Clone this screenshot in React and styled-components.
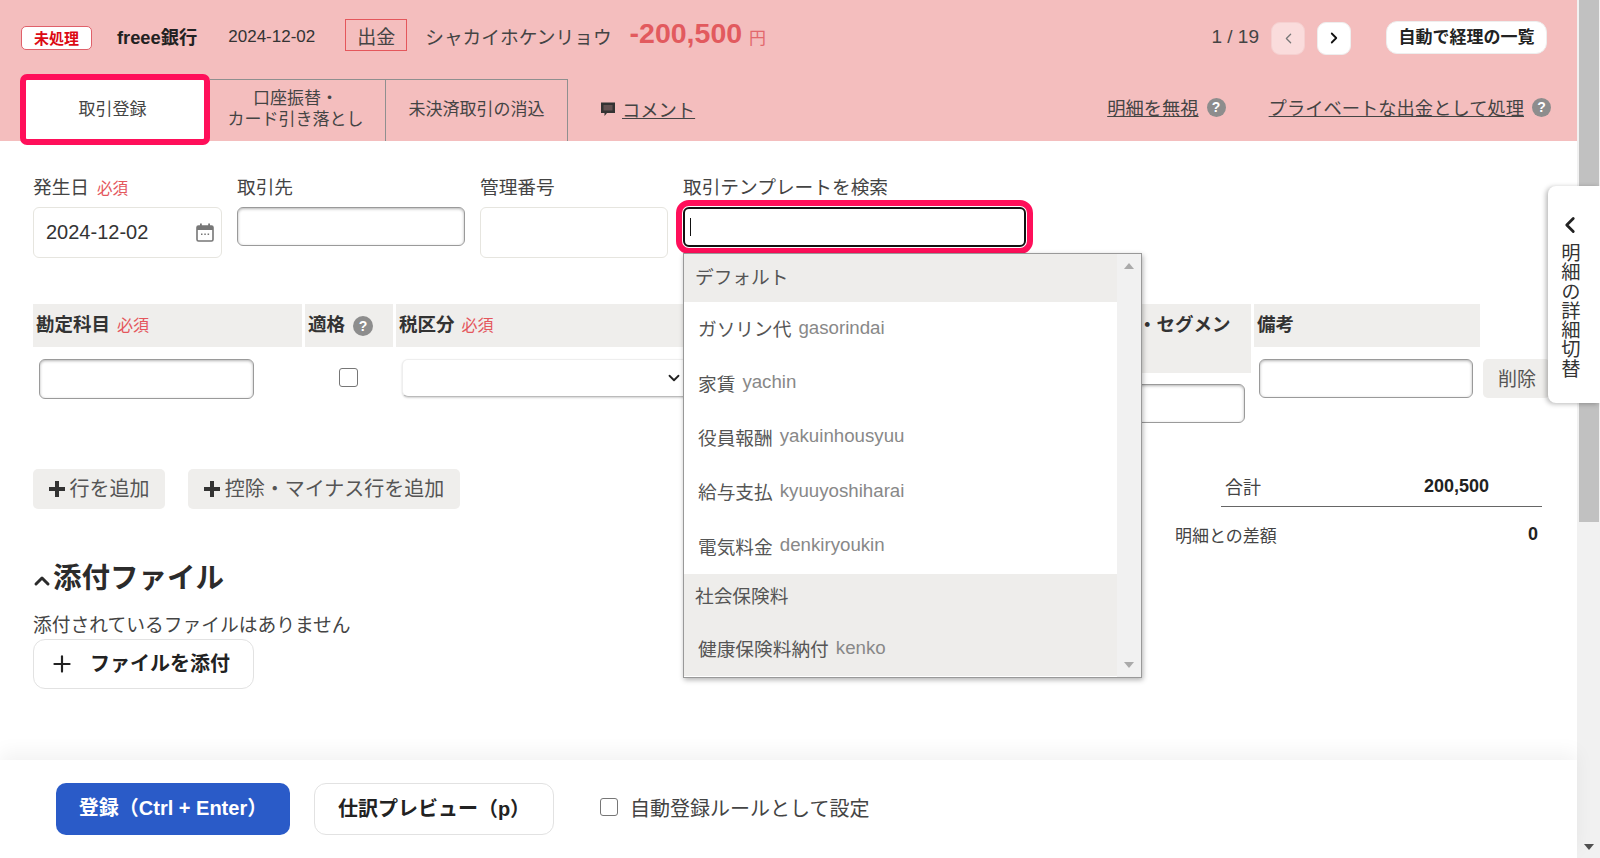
import React from "react";
import styled, { createGlobalStyle } from "styled-components";
import { ChevronLeft, ChevronRight, ChevronDown, ChevronUp, Plus } from "lucide-react";

const FONT = '"Liberation Sans", "Noto Sans CJK JP", sans-serif';

const Global = createGlobalStyle`
  html, body { margin: 0; padding: 0; height: 858px; overflow: hidden; background: #fff; }
  body { font-family: ${FONT}; color: #444; }
  * { box-sizing: border-box; }
`;

const Page = styled.div`
  display: grid;
  grid-template-columns: 1577px 23px;
  width: 1600px;
  height: 858px;
  position: relative;
  overflow: hidden;
`;
const Main = styled.main`
  display: flex;
  flex-direction: column;
  height: 858px;
  min-width: 0;
`;
const ScrollTrack = styled.div`
  background: #f1f1f1;
  display: flex;
  flex-direction: column;
  align-items: center;
  padding: 0 1px 0 1px;
`;
const ScrollThumb = styled.div`
  width: 20px;
  height: 522px;
  background: #c1c1c1;
`;
const ScrollDown = styled.div`
  margin-top: auto;
  margin-bottom: 8px;
  width: 0;
  height: 0;
  border-left: 5px solid transparent;
  border-right: 5px solid transparent;
  border-top: 6px solid #505050;
`;

/* header */
const Header = styled.header`
  background: #f4bebe;
  height: 141px;
  padding-top: 20px;
`;
const TopRow = styled.div`
  display: flex;
  align-items: center;
  height: 34px;
  padding: 0 30px 0 21px;
`;
const StatusBadge = styled.span`
  width: 71px;
  height: 24px;
  margin-top: 2px;
  display: flex;
  align-items: center;
  justify-content: center;
  background: #fff;
  border: 1px solid #e0606a;
  border-radius: 5px;
  color: #dc0a14;
  font-size: 15px;
  font-weight: 700;
  padding-bottom: 1px;
`;
const Bank = styled.span`
  margin-left: 25px;
  margin-top: -3px;
  font-size: 18.3px;
  font-weight: 700;
  color: #222;
`;
const DateText = styled.span`
  margin-left: 31px;
  font-size: 17px;
  color: #333;
`;
const Kind = styled.span`
  margin-left: 30px;
  width: 62px;
  height: 32px;
  margin-top: -4px;
  display: flex;
  align-items: center;
  justify-content: center;
  border: 1px solid #e4575c;
  font-size: 19px;
  color: #444;
`;
const Payee = styled.span`
  margin-left: 18px;
  margin-top: -3px;
  font-size: 18.7px;
  color: #444;
`;
const Amount = styled.span`
  margin-left: 18px;
  margin-top: -7px;
  font-size: 28.5px;
  font-weight: 700;
  color: #e25a5e;
`;
const Yen = styled.span`
  margin-left: 7px;
  margin-top: -2px;
  font-size: 17px;
  color: #e2686c;
`;
const Pager = styled.span`
  margin-left: auto;
  font-size: 19px;
  color: #444;
`;
const PageButton = styled.button`
  width: 34px;
  height: 33px;
  margin-left: ${(p) => p.$gap}px;
  margin-top: 2px;
  padding: 0;
  display: flex;
  align-items: center;
  justify-content: center;
  border: 1px solid ${(p) => (p.$disabled ? "#f5d0d0" : "#eee")};
  border-radius: 9px;
  background: ${(p) => (p.$disabled ? "#fadcdc" : "#fff")};
  color: ${(p) => (p.$disabled ? "#777" : "#111")};
`;
const ListButton = styled.button`
  margin-left: 35px;
  width: 161px;
  height: 33px;
  padding: 0 0 3px;
  border: 1px solid #eee;
  border-radius: 11px;
  background: #fff;
  font-family: ${FONT};
  font-size: 17px;
  font-weight: 700;
  color: #222;
`;
const TabRow = styled.div`
  display: flex;
  align-items: stretch;
  height: 62px;
  margin-top: 25px;
  padding: 0 26px 0 20px;
`;
const ActiveTab = styled.div`
  width: 190px;
  margin: -5px 0 -4px;
  padding: 0 5px 5px 0;
  position: relative;
  display: flex;
  align-items: center;
  justify-content: center;
  background: #fff;
  border: 6px solid #ff0f5a;
  border-radius: 7px;
  font-size: 17px;
  color: #444;
`;
const Tab = styled.div`
  width: ${(p) => p.$w}px;
  padding: 0 ${(p) => p.$right || 0}px ${(p) => p.$bottom || 0}px 0;
  display: flex;
  align-items: center;
  justify-content: center;
  text-align: center;
  border-top: 1px solid #8f8f8f;
  border-right: 1px solid #8f8f8f;
  font-size: 17px;
  line-height: 21px;
  color: #444;
`;
const CommentLink = styled.a`
  margin-left: 32px;
  margin-top: -3px;
  display: flex;
  align-items: center;
  gap: 6px;
  font-size: 18.3px;
  color: #444;
  & > span { text-decoration: underline; }
`;
const TabLinks = styled.div`
  margin-left: auto;
  display: flex;
  align-items: center;
  margin-top: -6px;
`;
const TabLink = styled.a`
  margin-left: ${(p) => p.$gap || 0}px;
  font-size: 18.3px;
  color: #444;
  text-decoration: underline;
`;
const Help = styled.span`
  width: ${(p) => p.$size || 19}px;
  height: ${(p) => p.$size || 19}px;
  margin-left: 8px;
  border-radius: 50%;
  display: inline-flex;
  align-items: center;
  justify-content: center;
  background: #8d8d8d;
  color: #fff;
  font-size: 14px;
  font-weight: 700;
`;

/* form */
const Body = styled.section`
  padding-left: 33px;
`;
const FieldRow = styled.div`
  display: flex;
  gap: 15px;
  padding-top: 35px;
`;
const Field = styled.div`
  width: ${(p) => p.$w}px;
  display: flex;
  flex-direction: column;
`;
const Label = styled.label`
  height: 24px;
  margin-bottom: 7px;
  font-size: 18.7px;
  line-height: 24px;
  color: #444;
  white-space: nowrap;
`;
const Required = styled.span`
  margin-left: ${(p) => p.$gap || 8}px;
  font-size: ${(p) => p.$size || 15.5}px;
  font-weight: 400;
  color: #e4575c;
`;
const DateBox = styled.div`
  height: 51px;
  padding: 0 7px 0 12px;
  display: flex;
  align-items: center;
  justify-content: space-between;
  border: 1px solid #e6e5df;
  border-radius: 6px;
  font-size: 20px;
  color: #333;
`;
const TextInput = styled.input`
  display: block;
  width: ${(p) => (p.$w ? `${p.$w}px` : "100%")};
  height: ${(p) => p.$h || 39}px;
  padding: 0 6px;
  border: 1px solid #9a9a9a;
  border-radius: 6px;
  background: #fff;
  box-shadow: inset 0 1px 3px rgba(0, 0, 0, 0.3);
  outline: none;
`;
const PlainBox = styled.div`
  height: 51px;
  border: 1px solid #e6e5df;
  border-radius: 6px;
`;
const SearchBox = styled.div`
  height: 40px;
  padding-left: 5px;
  display: flex;
  align-items: center;
  border: 2px solid #111;
  border-radius: 6px;
  outline: 6px solid #ff0f5a;
  outline-offset: 1px;
  background: #fff;
`;
const Caret = styled.span`
  width: 1px;
  height: 18px;
  background: #111;
`;

const Table = styled.div`
  display: flex;
  gap: 3px;
  margin-top: 46px;
  align-items: flex-start;
`;
const Column = styled.div`
  width: ${(p) => p.$w}px;
  flex: none;
`;
const HeadCell = styled.div`
  width: ${(p) => (p.$w ? `${p.$w}px` : "auto")};
  height: ${(p) => p.$h || 43}px;
  padding: 9px 0 0 ${(p) => p.$pad ?? 3}px;
  background: #efeeec;
  font-size: 18.5px;
  line-height: 24px;
  font-weight: 700;
  color: #333;
  white-space: nowrap;
`;
const BodyCell = styled.div`
  padding: ${(p) => p.$top ?? 12}px 0 0 ${(p) => p.$left ?? 0}px;
  display: flex;
  align-items: flex-start;
  gap: ${(p) => p.$gap || 0}px;
`;
const Check = styled.span`
  display: block;
  flex: none;
  width: ${(p) => p.$size || 19}px;
  height: ${(p) => p.$size || 19}px;
  border: 1px solid #767676;
  border-radius: 3px;
  background: #fff;
`;
const SelectBox = styled.div`
  width: 288px;
  height: 38px;
  padding-right: 6px;
  display: flex;
  align-items: center;
  justify-content: flex-end;
  border: 1px solid #eee;
  border-bottom-color: #bbb;
  border-radius: 6px;
  background: #fff;
  box-shadow: 0 1px 2px rgba(0, 0, 0, 0.18);
  color: #222;
`;
const DeleteButton = styled.button`
  width: 67px;
  height: 39px;
  padding: 0 0 2px 15px;
  flex: none;
  text-align: left;
  border: 0;
  border-radius: 5px;
  background: #efeeec;
  font-family: ${FONT};
  font-size: 19px;
  color: #555;
`;

const ActionRow = styled.div`
  display: flex;
  align-items: flex-start;
  gap: 23px;
  margin-top: 46px;
  padding-right: 35px;
`;
const GrayButton = styled.button`
  width: ${(p) => p.$w}px;
  height: 40px;
  padding: 0 0 3px;
  display: flex;
  align-items: center;
  justify-content: center;
  gap: 5px;
  border: 0;
  border-radius: 5px;
  background: #efeeec;
  font-family: ${FONT};
  font-size: 20px;
  color: #555;
  & > svg { margin-top: 3px; }
`;
const Totals = styled.div`
  margin-left: auto;
  width: 367px;
`;
const TotalMain = styled.div`
  margin-left: 46px;
  height: 38px;
  padding: 0 53px 3px 4px;
  display: flex;
  align-items: center;
  justify-content: space-between;
  border-bottom: 1px solid #666;
  font-size: 18px;
  color: #444;
  & > b { color: #222; }
`;
const TotalDiff = styled.div`
  margin-top: 15px;
  height: 24px;
  padding-right: 4px;
  display: flex;
  align-items: center;
  justify-content: space-between;
  font-size: 17px;
  color: #444;
  & > b { font-size: 18px; color: #222; padding-top: 1px; }
`;

const AttachTitle = styled.h2`
  margin: 9px 0 0;
  height: 40px;
  display: flex;
  align-items: center;
  font-size: 28.5px;
  font-weight: 700;
  color: #2b2b2b;
  & > svg { margin: 12px -1px 0 -3px; }
`;
const AttachNote = styled.p`
  margin: 19px 0 0;
  height: 24px;
  font-size: 18.75px;
  line-height: 24px;
  color: #444;
`;
const AttachButton = styled.button`
  margin-top: 1px;
  width: 221px;
  height: 50px;
  padding: 0 0 3px 15px;
  display: flex;
  align-items: center;
  gap: 15px;
  border: 1px solid #e2e2e2;
  border-radius: 12px;
  background: #fff;
  font-family: ${FONT};
  font-size: 20px;
  font-weight: 700;
  color: #222;
  & > svg { margin-top: 3px; }
`;

/* footer */
const Footer = styled.footer`
  margin-top: auto;
  height: 98px;
  padding: 23px 0 0 56px;
  display: flex;
  align-items: flex-start;
  background: #fff;
  box-shadow: 0 -8px 18px rgba(0, 0, 0, 0.05);
  position: relative;
`;
const PrimaryButton = styled.button`
  width: 234px;
  height: 52px;
  padding: 0 0 5px;
  border: 0;
  border-radius: 10px;
  background: #2a5bc8;
  font-family: ${FONT};
  font-size: 20px;
  font-weight: 700;
  color: #fff;
  white-space: nowrap;
`;
const SecondaryButton = styled.button`
  margin-left: 24px;
  width: 240px;
  height: 52px;
  padding: 0 0 4px;
  border: 1px solid #e2e2e2;
  border-radius: 12px;
  background: #fff;
  font-family: ${FONT};
  font-size: 20px;
  font-weight: 700;
  color: #222;
`;
const RuleLabel = styled.label`
  margin-left: 46px;
  height: 52px;
  padding-bottom: 4px;
  display: flex;
  align-items: center;
  gap: 12px;
  font-size: 20px;
  color: #444;
`;

/* overlays */
const Dropdown = styled.div`
  position: absolute;
  left: 683px;
  top: 253px;
  width: 459px;
  height: 425px;
  display: grid;
  grid-template-columns: 1fr 24px;
  background: #fff;
  border: 1px solid #999;
  box-shadow: 1px 2px 5px rgba(0, 0, 0, 0.3);
  overflow: hidden;
`;
const DropList = styled.div`
  display: flex;
  flex-direction: column;
`;
const Group = styled.div`
  height: 48px;
  flex: none;
  padding: 0 0 6px 11px;
  display: flex;
  align-items: center;
  background: #eeedeb;
  font-size: 18.7px;
  color: #555;
`;
const Option = styled.div`
  height: 54.4px;
  flex: none;
  padding: 0 0 3px 14px;
  display: flex;
  align-items: center;
  gap: 7px;
  background: ${(p) => (p.$hover ? "#eeedeb" : "#fff")};
  font-size: 18.7px;
  color: #555;
  & > span { color: #888; }
`;
const DropScroll = styled.div`
  background: #f1f1f1;
  display: flex;
  flex-direction: column;
  align-items: center;
  justify-content: space-between;
  padding: 9px 0 9px;
`;
const ArrowUp = styled.i`
  width: 0;
  height: 0;
  border-left: 5px solid transparent;
  border-right: 5px solid transparent;
  border-bottom: 6px solid #aaa;
`;
const ArrowDown = styled.i`
  width: 0;
  height: 0;
  border-left: 5px solid transparent;
  border-right: 5px solid transparent;
  border-top: 6px solid #aaa;
`;
const SideTab = styled.button`
  position: absolute;
  left: 1548px;
  top: 186px;
  width: 52px;
  height: 217px;
  padding: 26px 9px 0 0;
  display: flex;
  flex-direction: column;
  align-items: center;
  gap: 5px;
  border: 0;
  border-radius: 8px 0 0 8px;
  background: #fff;
  box-shadow: -2px 1px 5px rgba(0, 0, 0, 0.28);
  font-family: ${FONT};
  color: #333;
  & > span {
    writing-mode: vertical-rl;
    font-size: 19.3px;
    line-height: 19px;
  }
`;

const CalendarIcon = () => (
  <svg width="18" height="19" viewBox="0 0 18 19" fill="none">
    <rect x="1" y="3" width="16" height="15" rx="1.5" fill="#fff" stroke="#777" strokeWidth="1.6" />
    <rect x="1" y="3" width="16" height="4" fill="#777" />
    <rect x="4" y="0.5" width="1.8" height="4" fill="#777" />
    <rect x="12.2" y="0.5" width="1.8" height="4" fill="#777" />
    <rect x="5" y="10.5" width="1.5" height="1.5" fill="#777" />
    <rect x="8.3" y="10.5" width="1.5" height="1.5" fill="#777" />
    <rect x="11.6" y="10.5" width="1.5" height="1.5" fill="#777" />
  </svg>
);
const CommentIcon = () => (
  <svg width="16" height="16" viewBox="0 0 16 16">
    <path d="M1 1.5h14v10.5H7l-2.5 3V12H1z" fill="#333" />
    <rect x="3.5" y="4" width="9" height="5.5" fill="#8a6a6a" opacity="0.55" />
  </svg>
);
const BoldPlus = () => (
  <svg width="16" height="16" viewBox="0 0 16 16">
    <path d="M6 0h4v6h6v4h-6v6H6v-6H0V6h6z" fill="#333" />
  </svg>
);

export default function App() {
  return (
    <>
      <Global />
      <Page>
        <Main>
          <Header>
            <TopRow>
              <StatusBadge>未処理</StatusBadge>
              <Bank>freee銀行</Bank>
              <DateText>2024-12-02</DateText>
              <Kind>出金</Kind>
              <Payee>シャカイホケンリョウ</Payee>
              <Amount>-200,500</Amount>
              <Yen>円</Yen>
              <Pager>1 / 19</Pager>
              <PageButton $gap={12} $disabled>
                <ChevronLeft size={17} strokeWidth={1.8} />
              </PageButton>
              <PageButton $gap={12}>
                <ChevronRight size={18} strokeWidth={2.4} />
              </PageButton>
              <ListButton>自動で経理の一覧</ListButton>
            </TopRow>
            <TabRow>
              <ActiveTab>取引登録</ActiveTab>
              <Tab $w={176} $bottom={4} $right={4}>
                <span>
                  口座振替・
                  <br />
                  カード引き落とし
                </span>
              </Tab>
              <Tab $w={182} $bottom={2}>未決済取引の消込</Tab>
              <CommentLink>
                <CommentIcon />
                <span>コメント</span>
              </CommentLink>
              <TabLinks>
                <TabLink>明細を無視</TabLink>
                <Help>?</Help>
                <TabLink $gap={43}>プライベートな出金として処理</TabLink>
                <Help>?</Help>
              </TabLinks>
            </TabRow>
          </Header>

          <Body>
            <FieldRow>
              <Field $w={189}>
                <Label>
                  発生日<Required>必須</Required>
                </Label>
                <DateBox>
                  2024-12-02
                  <CalendarIcon />
                </DateBox>
              </Field>
              <Field $w={228}>
                <Label>取引先</Label>
                <TextInput />
              </Field>
              <Field $w={188}>
                <Label>管理番号</Label>
                <PlainBox />
              </Field>
              <Field $w={343}>
                <Label>取引テンプレートを検索</Label>
                <SearchBox>
                  <Caret />
                </SearchBox>
              </Field>
            </FieldRow>

            <Table>
              <Column $w={269}>
                <HeadCell>
                  勘定科目<Required $size={16} $gap={7}>必須</Required>
                </HeadCell>
                <BodyCell $left={6}>
                  <TextInput $w={215} $h={40} />
                </BodyCell>
              </Column>
              <Column $w={88}>
                <HeadCell>
                  適格
                  <Help $size={20}>?</Help>
                </HeadCell>
                <BodyCell $left={34} $top={21}>
                  <Check />
                </BodyCell>
              </Column>
              <Column $w={364}>
                <HeadCell>
                  税区分<Required $size={16} $gap={7}>必須</Required>
                </HeadCell>
                <BodyCell $left={6}>
                  <SelectBox>
                    <ChevronDown size={18} strokeWidth={2.4} />
                  </SelectBox>
                </BodyCell>
              </Column>
              <Column $w={488}>
                <HeadCell $h={69} $pad={375}>
                  ・セグメン
                </HeadCell>
                <BodyCell $top={11}>
                  <TextInput $w={482} />
                </BodyCell>
              </Column>
              <Column $w={296}>
                <HeadCell $w={226}>備考</HeadCell>
                <BodyCell $left={5} $gap={10}>
                  <TextInput $w={214} />
                  <DeleteButton>削除</DeleteButton>
                </BodyCell>
              </Column>
            </Table>

            <ActionRow>
              <GrayButton $w={132}>
                <BoldPlus />
                行を追加
              </GrayButton>
              <GrayButton $w={272}>
                <BoldPlus />
                控除・マイナス行を追加
              </GrayButton>
              <Totals>
                <TotalMain>
                  合計
                  <b>200,500</b>
                </TotalMain>
                <TotalDiff>
                  明細との差額
                  <b>0</b>
                </TotalDiff>
              </Totals>
            </ActionRow>

            <AttachTitle>
              <ChevronUp size={24} strokeWidth={3} />
              添付ファイル
            </AttachTitle>
            <AttachNote>添付されているファイルはありません</AttachNote>
            <AttachButton>
              <Plus size={26} strokeWidth={2} />
              ファイルを添付
            </AttachButton>
          </Body>

          <Footer>
            <PrimaryButton>登録（Ctrl + Enter）</PrimaryButton>
            <SecondaryButton>仕訳プレビュー（p）</SecondaryButton>
            <RuleLabel>
              <Check $size={18} />
              自動登録ルールとして設定
            </RuleLabel>
          </Footer>
        </Main>

        <ScrollTrack>
          <ScrollThumb />
          <ScrollDown />
        </ScrollTrack>

        <Dropdown>
          <DropList>
            <Group>デフォルト</Group>
            <Option>ガソリン代<span>gasorindai</span></Option>
            <Option>家賃<span>yachin</span></Option>
            <Option>役員報酬<span>yakuinhousyuu</span></Option>
            <Option>給与支払<span>kyuuyoshiharai</span></Option>
            <Option>電気料金<span>denkiryoukin</span></Option>
            <Group>社会保険料</Group>
            <Option $hover>健康保険料納付<span>kenko</span></Option>
          </DropList>
          <DropScroll>
            <ArrowUp />
            <ArrowDown />
          </DropScroll>
        </Dropdown>

        <SideTab>
          <ChevronLeft size={26} strokeWidth={2.6} color="#222" />
          <span>明細の詳細切替</span>
        </SideTab>
      </Page>
    </>
  );
}
